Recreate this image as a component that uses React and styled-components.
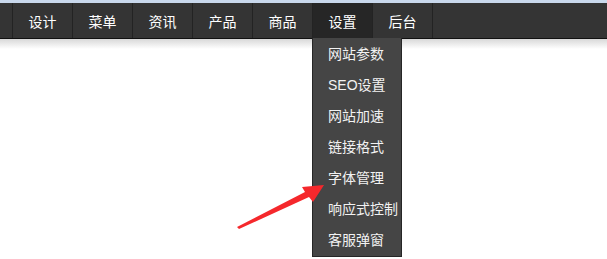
import React from "react";
import styled, { createGlobalStyle } from "styled-components";

const navItems = ["设计", "菜单", "资讯", "产品", "商品", "设置", "后台"];
const menuItems = [
  "网站参数",
  "SEO设置",
  "网站加速",
  "链接格式",
  "字体管理",
  "响应式控制",
  "客服弹窗",
];

const App = () => {
  return (
    <>
      <GlobalStyle />
      <Page>
        <TopStrip />
        <NavBar>
          <NavList>
            {navItems.map((item) => (
              <NavItem key={item} active={item === "设置"}>
                {item}
                {item === "设置" && (
                  <DropDown>
                    {menuItems.map((m) => (
                      <DropItem key={m}>{m}</DropItem>
                    ))}
                  </DropDown>
                )}
              </NavItem>
            ))}
          </NavList>
        </NavBar>
        <Shadow />
        <Arrow width="100" height="62" viewBox="0 0 100 62">
          <polygon points="1,59 69,24 66,19 88,17 77,34 73,29 3,61" fill="#f5282c" />
        </Arrow>
      </Page>
    </>
  );
};

const GlobalStyle = createGlobalStyle`
  body {
    margin: 0;
    background: #fff;
    font-family: "Liberation Sans", "Noto Sans CJK SC", sans-serif;
  }
`;

const Page = styled.div`
  position: relative;
  width: 607px;
  height: 259px;
  overflow: hidden;
`;

const TopStrip = styled.div`
  height: 3px;
  background: #c9d8ec;
`;

const NavBar = styled.div`
  height: 35px;
  background: #343434;
  border-bottom: 1px solid #111;
  padding-left: 12px;
`;

const NavList = styled.div`
  display: flex;
  height: 100%;
  border-left: 1px solid #232323;
`;

const NavItem = styled.div`
  position: relative;
  width: 60px;
  height: 100%;
  box-sizing: border-box;
  border-right: 1px solid #232323;
  background: ${(p) => (p.active ? "#262626" : "transparent")};
  color: #fff;
  font-size: 14px;
  display: flex;
  align-items: center;
  justify-content: center;
`;

const DropDown = styled.div`
  position: absolute;
  top: 35px;
  left: -1px;
  width: 90px;
  box-sizing: border-box;
  padding-top: 1px;
  background: #454545;
  border: 1px solid #262626;
  border-top: none;
  z-index: 2;
`;

const DropItem = styled.div`
  height: 31px;
  line-height: 31px;
  padding-left: 15px;
  color: #f2f2f2;
  font-size: 14px;
  white-space: nowrap;
`;

const Shadow = styled.div`
  height: 10px;
  background: linear-gradient(#d8d8d8, #fff);
`;

const Arrow = styled.svg`
  position: absolute;
  left: 236px;
  top: 168px;
  z-index: 3;
`;

export default App;
